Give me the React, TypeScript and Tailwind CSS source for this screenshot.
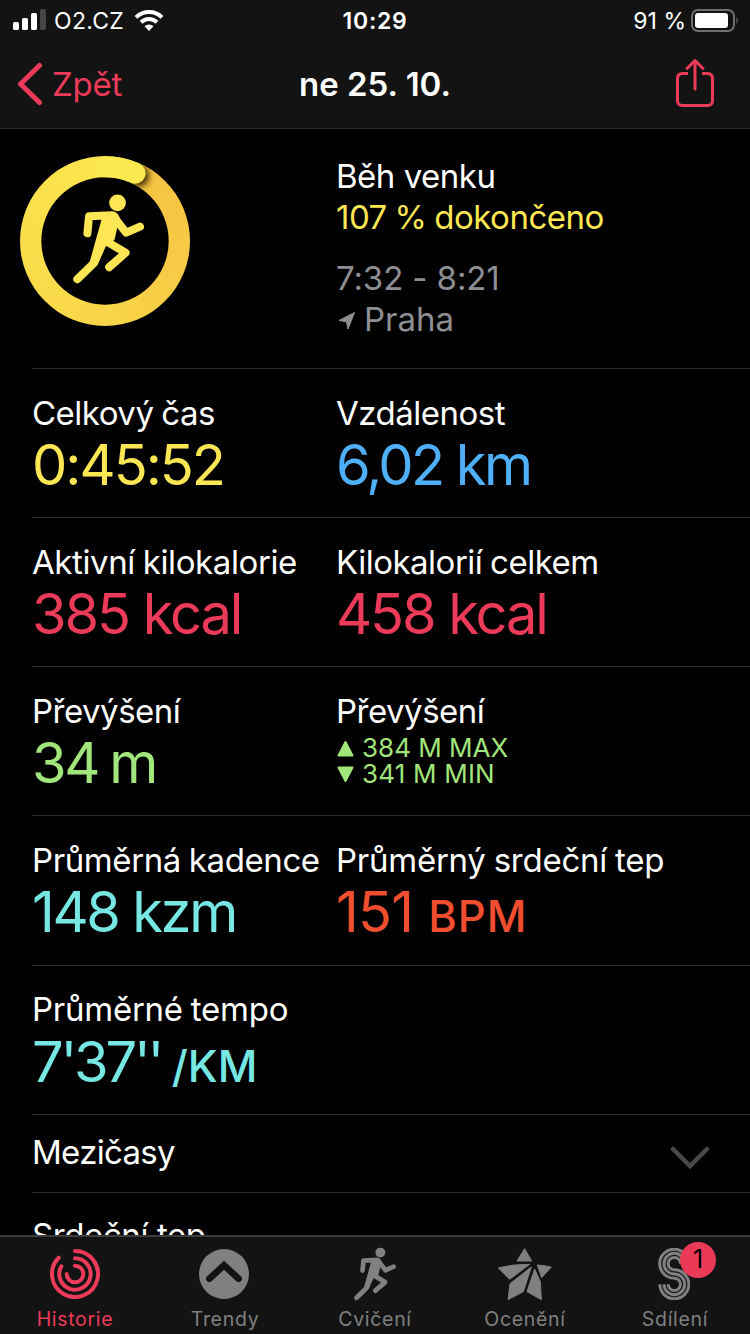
import type { ReactNode } from 'react';
import clsx from 'clsx';

interface MetricProps {
  label: string;
  labelClass?: string;
  children: ReactNode;
  className?: string;
}

function Metric({ label, labelClass = 'tracking-[-0.4px]', children, className }: MetricProps) {
  return (
    <div className="whitespace-nowrap">
      <div className={clsx('text-[33px] leading-[40px] [word-spacing:-1px]', labelClass)}>{label}</div>
      <div className={clsx('text-[56px] leading-[64px]', className)}>{children}</div>
    </div>
  );
}

function Row({ children, className = 'h-[149px]' }: { children: ReactNode; className?: string }) {
  return (
    <div
      className={clsx(
        'ml-8 grid shrink-0 grid-cols-[304px_1fr] border-b border-[#2f2f31] pt-6',
        className,
      )}
    >
      {children}
    </div>
  );
}

function Runner({ className }: { className?: string }) {
  return (
    <svg viewBox="188 148 212 268" className={className} fill="none" stroke="currentColor" strokeLinecap="round" strokeLinejoin="round">
      <circle cx="321" cy="174" r="25" fill="currentColor" stroke="none" />
      <path
        d="M274 204 L308 201 Q322 203 327 218 L312 284 L284 306 L262 355 L238 350 L272 228 Z"
        fill="currentColor"
        stroke="none"
      />
      <path d="M231 265 L236 214 L306 211 L347 263 L388 245" strokeWidth="24" />
      <path d="M288 289 L345 323 L296 366" strokeWidth="24" />
      <path d="M283 280 L251 353 L201 402" strokeWidth="24" />
    </svg>
  );
}

function ProgressRing() {
  return (
    <div className="relative h-[170px] w-[170px] rounded-full bg-[conic-gradient(from_24deg,#f5c242,#f7cb45_25%,#f9d84a_50%,#fae04c_75%,#fce94f)]">
      <svg viewBox="30 33 510 510" className="absolute inset-0 h-full w-full">
        <defs>
          <clipPath id="band">
            <path clipRule="evenodd" d="M31 288a254 254 0 1 0 508 0a254 254 0 1 0-508 0ZM94 288a191 191 0 1 0 382 0a191 191 0 1 0-382 0Z" />
          </clipPath>
          <filter id="soft" x="-50%" y="-50%" width="200%" height="200%">
            <feGaussianBlur stdDeviation="9" />
          </filter>
        </defs>
        <circle cx="285" cy="288" r="191" fill="#000" />
        <g clipPath="url(#band)">
          <circle cx="385" cy="93" r="32" fill="#3a2a00" filter="url(#soft)" />
        </g>
        <path d="M285 65.500 A222.500 222.500 0 0 1 375.500 84.700" fill="none" stroke="#fce84f" strokeWidth="63" strokeLinecap="round" />
      </svg>
      <div className="absolute inset-0 flex items-center justify-center pb-[4px] pl-[6px]">
        <Runner className="h-[90px] w-[71px] text-[#fce653]" />
      </div>
    </div>
  );
}

function StatusBar() {
  return (
    <div className="grid h-10 grid-cols-[1fr_auto_1fr] items-center text-[23px] text-white">
      <div className="flex items-center pl-[13px]">
        <svg width="34" height="22" viewBox="0 0 34 22" fill="#fff">
          <rect x="0" y="13" width="6" height="8" rx="1.500" />
          <rect x="9" y="9" width="6" height="12" rx="1.500" />
          <rect x="18" y="4" width="6" height="17" rx="1.500" />
          <rect x="27" y="0" width="6" height="21" rx="1.500" fill="#464648" />
        </svg>
        <span className="mt-[2px] ml-[7px] tracking-[0.3px]">O2.CZ</span>
        <svg width="30" height="22" viewBox="0 0 30 22" className="mb-px ml-[10px]" fill="none" stroke="#fff" strokeWidth="4">
          <path d="M2 8.300 A18.500 18.500 0 0 1 28 8.300" />
          <path d="M7 13.200 A11.500 11.500 0 0 1 23 13.200" />
          <path d="M15 22 L10.500 17.200 A6.500 6.500 0 0 1 19.500 17.200 Z" fill="#fff" stroke="none" />
        </svg>
      </div>
      <span className="mt-[2px] font-semibold tracking-[0.7px]">10:29</span>
      <div className="flex items-center justify-end pr-[11px]">
        <span className="mt-[2px]">91 %</span>
        <svg width="48" height="23" viewBox="0 0 48 23" className="ml-[5px]">
          <rect x="1" y="1" width="42" height="21" rx="6" fill="none" stroke="#6e6e70" strokeWidth="2" />
          <rect x="4" y="4" width="33" height="15" rx="3" fill="#fff" />
          <path d="M45.500 8 Q48 11.500 45.500 15 Z" fill="#6e6e70" />
        </svg>
      </div>
    </div>
  );
}

function NavBar() {
  return (
    <div className="grid h-[88px] grid-cols-[1fr_auto_1fr] items-center text-[33px]">
      <div className="flex items-center pl-4 text-[#ec3a59]">
        <svg width="28" height="44" viewBox="0 0 28 44" fill="none" stroke="currentColor" strokeWidth="5" strokeLinecap="round" strokeLinejoin="round">
          <path d="M23.500 3.500 L4.500 22 L23.500 40.500" />
        </svg>
        <span className="mt-[2px] ml-2 tracking-[-0.2px]">Zpět</span>
      </div>
      <span className="mt-[2px] font-semibold text-white">ne 25. 10.</span>
      <div className="flex justify-end pr-[35px] pb-[3px] text-[#ec3a59]">
        <svg width="40" height="50" viewBox="0 0 40 50" fill="none" stroke="currentColor" strokeWidth="3" strokeLinecap="round" strokeLinejoin="round">
          <path d="M13 15.500 H7.500 Q2.500 15.500 2.500 20.500 V42.500 Q2.500 47.500 7.500 47.500 H32.500 Q37.500 47.500 37.500 42.500 V20.500 Q37.500 15.500 32.500 15.500 H27" strokeLinecap="butt" />
          <path d="M20 31 V2.500 M12 10.500 L20 2.500 L28 10.500" />
        </svg>
      </div>
    </div>
  );
}

function RingsIcon() {
  return (
    <svg width="50" height="50" viewBox="0 0 150 150" fill="none" stroke="currentColor" strokeWidth="12" strokeLinecap="round">
      <path d="M75 6 A69 69 0 1 1 26.200 26.200" />
      <path d="M75 28 A47 47 0 1 1 34 52" />
      <path d="M75 50 A25 25 0 1 1 50 75" />
    </svg>
  );
}

function TrendsIcon() {
  return (
    <svg width="50" height="50" viewBox="0 0 150 150" className="mr-[2px]">
      <circle cx="75" cy="75" r="75" fill="currentColor" />
      <path d="M31 89 L75 49 L119 89" fill="none" stroke="#131313" strokeWidth="20" strokeLinecap="round" />
    </svg>
  );
}

function AwardsIcon() {
  return (
    <svg width="56" height="54" viewBox="292 54 168 162" fill="currentColor" stroke="currentColor" strokeWidth="3" strokeLinejoin="round">
      <path d="M375 59 L396 96 L352 96 Z" />
      <path d="M296 117 Q340 105 390 106 L330 151 Z" />
      <path d="M413 108 Q435 110 455 114 L426 146 Z" />
      <path d="M395 114 L371 188 L325 212 L331 164 Z" />
      <path d="M405 120 L422 158 L425 212 L382 188 Z" />
    </svg>
  );
}

function SharingIcon() {
  return (
    <svg width="32" height="52" viewBox="23 30 96 156" className="mr-[2px]" fill="none" stroke="currentColor" strokeWidth="9">
      <path d="M115 77 A43.500 43.500 0 1 0 72 120.500 A18.500 18.500 0 1 1 53.500 139" />
      <path d="M103 77 A31 31 0 1 0 72 108 A31 31 0 1 1 41 139" />
      <path d="M90.500 77 A18.500 18.500 0 1 0 72 95.500 A43.500 43.500 0 1 1 28.500 139" />
    </svg>
  );
}

function Tab({ label, active, children }: { label: string; active?: boolean; children: ReactNode }) {
  return (
    <div className={clsx('flex flex-col items-center', active ? 'text-[#ec3a59]' : 'text-[#808080]')}>
      <div className="relative mt-[9px] flex h-[56px] items-center justify-center">{children}</div>
      <span className="mt-[5px] text-[19.500px] leading-6 tracking-[0.700px]">{label}</span>
    </div>
  );
}

export default function App() {
  return (
    <div className="flex h-[1334px] w-[750px] flex-col overflow-hidden bg-black font-['Inter',sans-serif] text-white">
      <header className="h-[129px] shrink-0 border-b border-[#29292b] bg-[#131313]">
        <StatusBar />
        <NavBar />
      </header>

      <main className="flex min-h-0 flex-1 flex-col overflow-hidden">
        <div className="ml-8 grid h-[240px] shrink-0 grid-cols-[304px_1fr] border-b border-[#2f2f31] pt-[27px]">
          <div className="-ml-3">
            <ProgressRing />
          </div>
          <div className="text-[33px] leading-[41px]">
            <div className="tracking-[-0.5px]">Běh venku</div>
            <div className="tracking-[-0.5px] text-[#fce653] [word-spacing:-1px]">107 % dokončeno</div>
            <div className="mt-5 tracking-[-0.1px] text-[#8e8e93]">7:32 - 8:21</div>
            <div className="flex items-center text-[#8e8e93]">
              <svg width="18" height="20" viewBox="0 0 18 20" className="mt-[3px] mr-[8px] ml-[2px]" fill="currentColor" stroke="currentColor" strokeLinejoin="round">
                <path d="M16.500 1.500 L10 18 L8.500 10.800 L1 9.500 Z" />
              </svg>
              Praha
            </div>
          </div>
        </div>

        <Row>
          <Metric label="Celkový čas" labelClass="tracking-[-0.5px]" className="tracking-[-2px] text-[#fce653]">0:45:52</Metric>
          <Metric label="Vzdálenost" labelClass="tracking-[-0.5px]" className="tracking-[-2.6px] text-[#4fb0f9]">6,02 km</Metric>
        </Row>
        <Row>
          <Metric label="Aktivní kilokalorie" className="tracking-[-2.1px] text-[#ec3a59]">385 kcal</Metric>
          <Metric label="Kilokalorií celkem" labelClass="tracking-[-0.5px]" className="tracking-[-2.1px] text-[#ec3a59]">458 kcal</Metric>
        </Row>
        <Row>
          <Metric label="Převýšení" labelClass="tracking-[-0.5px]" className="tracking-[-2.4px] text-[#a1e67a] [word-spacing:-2px]">34 m</Metric>
          <div>
            <div className="text-[33px] leading-[40px] tracking-[-0.5px]">Převýšení</div>
            <div className="mt-1 text-[26px] leading-[26px] text-[#a1e67a]">
              <div className="flex items-center">
                <svg width="17" height="17" viewBox="0 0 17 17" className="mr-[8px] ml-px" fill="currentColor" stroke="currentColor" strokeWidth="2" strokeLinejoin="round">
                  <path d="M8.500 2 L15.500 15.500 H1.500 Z" />
                </svg>
                384 M MAX
              </div>
              <div className="flex items-center">
                <svg width="17" height="17" viewBox="0 0 17 17" className="mr-[8px] ml-px" fill="currentColor" stroke="currentColor" strokeWidth="2" strokeLinejoin="round">
                  <path d="M8.500 15 L15.500 1.500 H1.500 Z" />
                </svg>
                <span className="tracking-[0.2px]">341 M MIN</span>
              </div>
            </div>
          </div>
        </Row>
        <Row className="h-[150px]">
          <Metric label="Průměrná kadence" labelClass="tracking-[-0.4px]" className="tracking-[-2.3px] text-[#76e7e3]">148 kzm</Metric>
          <Metric label="Průměrný srdeční tep" labelClass="tracking-[-0.25px]" className="tracking-[-0.8px] text-[#f04e2f]">
            151 <span className="text-[43.500px] font-[450] tracking-[1px]">BPM</span>
          </Metric>
        </Row>
        <Row>
          <Metric label="Průměrné tempo" labelClass="-mt-px mb-px tracking-[-0.25px]" className="text-[#76e7e3]">
            <span className="tracking-[-3.2px] [word-spacing:-2px]">7'37'' </span>
            <span className="text-[43.500px] font-[450]">/KM</span>
          </Metric>
        </Row>

        <div className="ml-8 flex h-[78px] shrink-0 items-center justify-between border-b border-[#2f2f31] pr-10 text-[33px]">
          <span className="pb-[2px] tracking-[-0.7px]">Mezičasy</span>
          <svg width="40" height="24" viewBox="0 0 40 24" className="mt-2" fill="none" stroke="#48484a" strokeWidth="4.500" strokeLinecap="round">
            <path d="M3 3 L20 20 L37 3" />
          </svg>
        </div>
        <div className="ml-8 shrink-0 pt-[22px] text-[33px] leading-[40px] tracking-[-0.4px]">Srdeční tep</div>
      </main>

      <nav className="grid h-[99px] shrink-0 grid-cols-5 border-t-2 border-[#3d3d3f] bg-[#131313]">
        <Tab label="Historie" active>
          <RingsIcon />
        </Tab>
        <Tab label="Trendy">
          <TrendsIcon />
        </Tab>
        <Tab label="Cvičení">
          <Runner className="h-[54px] w-[42px]" />
        </Tab>
        <Tab label="Ocenění">
          <AwardsIcon />
        </Tab>
        <Tab label="Sdílení">
          <SharingIcon />
          <span className="absolute top-[-4px] left-[22px] flex h-9 w-9 items-center justify-center rounded-full bg-[#ea3a58] text-[25px] text-black">
            1
          </span>
        </Tab>
      </nav>
    </div>
  );
}
